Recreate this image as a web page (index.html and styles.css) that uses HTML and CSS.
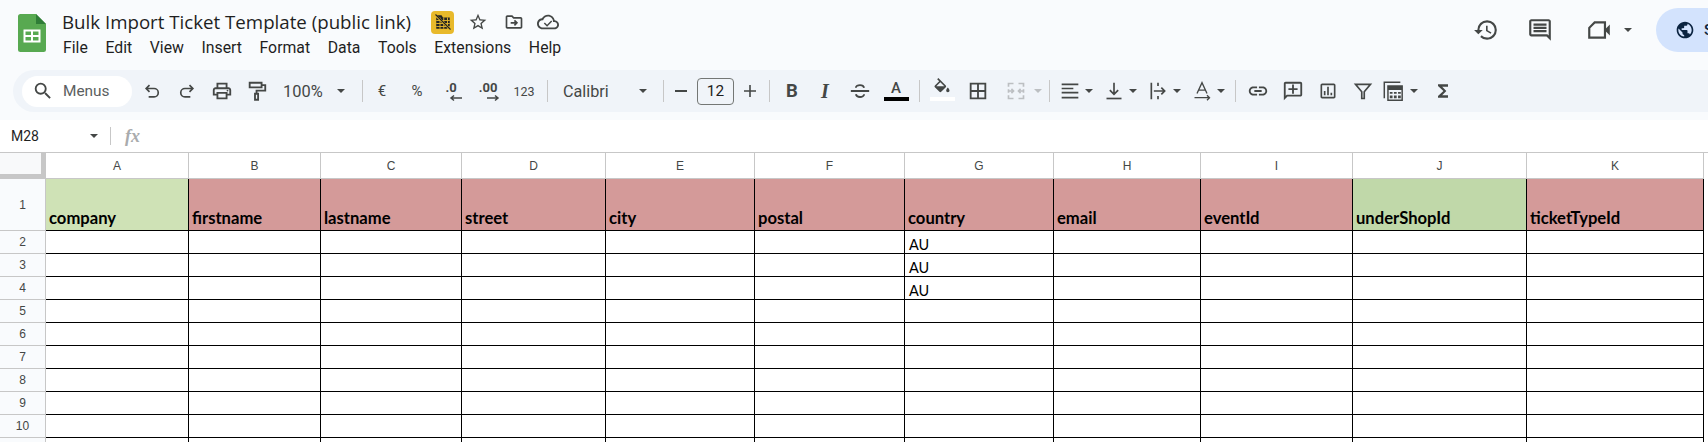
FILE: index.html
```html
<!DOCTYPE html>
<html lang="en">
<head>
<meta charset="utf-8">
<title>Bulk Import Ticket Template (public link)</title>
<link rel="stylesheet" href="styles.css">
</head>
<body>
<header class="topbar">
  <svg class="logo" viewBox="0 0 28 38"><path fill="#58a951" d="M2.500 0H18l10 10v25.500a2.500 2.500 0 0 1-2.500 2.500h-23A2.500 2.500 0 0 1 0 35.500v-33A2.500 2.500 0 0 1 2.500 0z"/><path fill="#2f7d37" d="M18 0l10 10H18z"/><path fill="none" stroke="#fff" stroke-width="2" d="M6.500 16.500h15v11h-15zM6.500 22h15M14 16.500v11"/></svg>
  <div class="docinfo">
    <div class="titlerow">
      <span class="doctitle">Bulk Import Ticket Template (public link)</span>
      <span class="badge"><svg viewBox="0 0 24 24" class="ic18 dark"><path d="M3 3h7l2 3h9v15H3z"/><path stroke="#e8b92b" stroke-width="1.200" fill="none" d="M3 10h18M3 14h18M3 18h18M8 6v15M13 6v15M18 6v15"/><path stroke="#e8b92b" stroke-width="3" d="M2 3l20 19"/><path stroke="#222" stroke-width="1.500" d="M2 2l20 20"/></svg></span>
      <span class="titleicon star"><svg viewBox="0 0 24 24" class="ic20"><path d="M22 9.240l-7.190-.62L12 2 9.190 8.630 2 9.240l5.460 4.730L5.820 21 12 17.270 18.180 21l-1.630-7.030L22 9.240zM12 15.400l-3.760 2.270 1-4.280-3.320-2.880 4.380-.38L12 6.100l1.710 4.040 4.380.38-3.320 2.880 1 4.280L12 15.400z"/></svg></span>
      <span class="titleicon"><svg viewBox="0 0 24 24" class="ic20"><path d="M20 6h-8l-2-2H4c-1.100 0-1.990.9-1.990 2L2 18c0 1.100.9 2 2 2h16c1.100 0 2-.9 2-2V8c0-1.100-.9-2-2-2zm0 12H4V6h5.170l2 2H20v10z"/><path class="line" d="M8 13h7M12.500 10l3 3-3 3"/></svg></span>
      <span class="titleicon cloud"><svg viewBox="0 0 24 24" class="ic22"><path d="M19.350 10.040C18.670 6.590 15.640 4 12 4 9.110 4 6.600 5.640 5.350 8.040 2.340 8.360 0 10.910 0 14c0 3.310 2.690 6 6 6h13c2.760 0 5-2.240 5-5 0-2.640-2.050-4.780-4.650-4.960zM19 18H6c-2.210 0-4-1.790-4-4s1.790-4 4-4h.71C7.370 7.690 9.480 6 12 6c3.040 0 5.500 2.460 5.500 5.500v.5H19c1.660 0 3 1.340 3 3s-1.340 3-3 3z"/><path class="thin" d="M8 13l3 3 5-5"/></svg></span>
    </div>
    <nav class="menubar">
      <span>File</span><span>Edit</span><span>View</span><span>Insert</span><span>Format</span><span>Data</span><span>Tools</span><span>Extensions</span><span>Help</span>
    </nav>
  </div>
  <div class="actions">
    <span class="act hist"><svg viewBox="0 0 24 24" class="ic26"><path d="M13 3a9 9 0 0 0-9 9H1l3.890 3.890.07.14L9 12H6c0-3.870 3.130-7 7-7s7 3.130 7 7-3.130 7-7 7c-1.930 0-3.680-.79-4.940-2.060l-1.420 1.420A8.954 8.954 0 0 0 13 21a9 9 0 0 0 0-18zm-1 5v5l4.280 2.540.72-1.210-3.500-2.080V8H12z"/></svg></span>
    <span class="act chat"><svg viewBox="0 0 24 24" class="ic26"><path d="M21.990 4c0-1.100-.89-2-1.990-2H4c-1.100 0-2 .9-2 2v12c0 1.100.9 2 2 2h14l4 4-.01-18zM20 4v13.170L18.830 16H4V4h16zM6 12h12v2H6zm0-3h12v2H6zm0-3h12v2H6z"/></svg></span>
    <span class="act meet"><svg viewBox="0 0 24 24" class="ic26"><path class="line" d="M8 5h9.500v14H3V10z"/><path d="M17 12l5-5v10z"/></svg><i class="caret"></i></span>
    <span class="share"><svg viewBox="0 0 24 24" class="ic20 navy"><path d="M12 2C6.480 2 2 6.480 2 12s4.480 10 10 10 10-4.480 10-10S17.520 2 12 2zm-1 17.930c-3.950-.49-7-3.850-7-7.930 0-.62.08-1.210.21-1.790L9 15v1c0 1.100.9 2 2 2v1.930zm6.900-2.540c-.26-.81-1-1.390-1.900-1.390h-1v-3c0-.55-.45-1-1-1H8v-2h2c.55 0 1-.45 1-1V7h2c1.100 0 2-.9 2-2v-.41c2.930 1.190 5 4.060 5 7.410 0 2.080-.8 3.970-2.100 5.390z"/></svg><span class="sharetext">Share</span></span>
  </div>
</header>

<div class="toolbar">
  <div class="search"><svg viewBox="0 0 24 24" class="ic22"><path d="M15.500 14h-.79l-.28-.27A6.470 6.470 0 0 0 16 9.500 6.500 6.500 0 1 0 9.500 16c1.610 0 3.090-.59 4.230-1.570l.27.28v.79l5 4.990L20.490 19l-4.990-5zm-6 0C7.010 14 5 11.990 5 9.500S7.010 5 9.500 5 14 7.010 14 9.500 11.990 14 9.500 14z"/></svg><span>Menus</span></div>
  <span class="slot w35 first"><svg viewBox="0 0 24 24" class="ic20"><path class="line" d="M9 5L5 9l4 4M5 9h9.500a5 5 0 0 1 0 10H8"/></svg></span>
  <span class="slot w35"><svg viewBox="0 0 24 24" class="ic20"><path class="line" d="M15 5l4 4-4 4M19 9H9.500a5 5 0 0 0 0 10H16"/></svg></span>
  <span class="slot w35"><svg viewBox="0 0 24 24" class="ic22"><path d="M19 8h-1V3H6v5H5c-1.660 0-3 1.340-3 3v6h4v4h12v-4h4v-6c0-1.660-1.340-3-3-3zM8 5h8v3H8V5zm8 14H8v-4h8v4zm2-4v-2H6v2H4v-4c0-.55.45-1 1-1h14c.55 0 1 .45 1 1v4h-2z"/><circle cx="18" cy="11.500" r="1"/></svg></span>
  <span class="slot w35"><svg viewBox="0 0 24 24" class="ic22"><path class="line" d="M4 3h13v5H4zM17 5.500h4v6H11.500V15M9.800 15h3.400v6.500H9.800z"/></svg></span>
  <span class="zoomctl"><span>100%</span><i class="caret"></i></span>
  <i class="sep w10"></i>
  <span class="slot w30 ttext">€</span>
  <span class="slot w40 ttext">%</span>
  <span class="slot w28"><span class="dec"><b>.0</b><svg viewBox="0 0 14 6" class="arrow"><path class="line thinner" d="M13 3H2M5 .5L2 3l3 2.500"/></svg></span></span>
  <span class="slot w46"><span class="dec"><b>.00</b><svg viewBox="0 0 14 6" class="arrow"><path class="line thinner" d="M1 3h11M9 .5L12 3 9 5.500"/></svg></span></span>
  <span class="slot w26 ttext small">123</span>
  <i class="sep w20"></i>
  <span class="fontctl"><span>Calibri</span><i class="caret"></i></span>
  <i class="sep w10"></i>
  <span class="slot w26 sign"><i class="hbar"></i></span>
  <span class="sizebox">12</span>
  <span class="slot w32 sign"><svg viewBox="0 0 12 12" class="ic12"><path d="M5.200 0h1.600v5.200H12v1.600H6.800V12H5.200V6.800H0V5.200h5.200z"/></svg></span>
  <i class="sep w6"></i>
  <span class="slot w40 glyph bold">B</span>
  <span class="slot w26 glyph ital">I</span>
  <span class="slot w44"><svg viewBox="0 0 24 24" class="ic22"><path class="line" d="M2 12h20M16.500 8.500C16 6.500 14.300 5.500 12 5.500S7.500 6.800 7.500 8.500M7.500 15.500c.5 2 2.200 3 4.500 3s4.500-1.300 4.500-3"/></svg></span>
  <span class="slot w28 colorbtn"><span class="glyph letter">A</span><i class="bar black"></i></span>
  <i class="sep w18"></i>
  <span class="slot w28 colorbtn"><svg viewBox="0 0 24 24" class="ic20 fillicon"><path fill-rule="evenodd" d="M16.560 8.940L7.620 0 6.210 1.410l2.380 2.380-5.150 5.150a1.490 1.490 0 0 0 0 2.120l5.500 5.500c.29.290.68.44 1.060.44s.77-.15 1.060-.44l5.500-5.500c.59-.58.59-1.530 0-2.120zM5.210 10L10 5.210 14.790 10H5.210zM19 11.500s-2 2.170-2 3.500c0 1.100.9 2 2 2s2-.9 2-2c0-1.330-2-3.500-2-3.500z"/></svg><i class="bar white"></i></span>
  <span class="slot w44"><svg viewBox="0 0 24 24" class="ic22"><path class="line" d="M4 4h16v16H4zM4 12h16M12 4v16"/></svg></span>
  <span class="slot w32"><svg viewBox="0 0 24 24" class="ic20 faint"><path class="line" d="M3 7V3h6M15 3h6v4M3 17v4h6M15 21h6v-4M3 10v1M21 10v1M3 13v1M21 13v1M2 12h7M6.500 9.500L9 12l-2.500 2.500M22 12h-7M17.500 9.500L15 12l2.500 2.500"/></svg></span>
  <span class="slot w12"><i class="caret dim"></i></span>
  <i class="sep w10"></i>
  <div class="group">
    <span class="drop"><svg viewBox="0 0 24 24" class="ic20"><path d="M2 3h20v2H2zM2 8h14v2H2zM2 13h20v2H2zM2 19h20v2H2z"/></svg><i class="caret"></i></span>
    <span class="drop"><svg viewBox="0 0 24 24" class="ic20"><path d="M3 20h18v2H3z"/><path class="line" d="M12 2v14M7 11l5 5 5-5"/></svg><i class="caret"></i></span>
    <span class="drop"><svg viewBox="0 0 24 24" class="ic20"><path class="line" d="M4 2v20M12 2v4M12 18v4M7 12h13M16 8l4 4-4 4"/></svg><i class="caret"></i></span>
    <span class="drop"><svg viewBox="0 0 24 24" class="ic20"><path class="line thin" d="M6 15l6-13 6 13M8 11h8M3 20h18M18 17l3 3-3 3"/></svg><i class="caret"></i></span>
  </div>
  <i class="sep w10"></i>
  <span class="slot w35"><svg viewBox="0 0 24 24" class="ic22"><path d="M3.900 12c0-1.710 1.390-3.100 3.100-3.100h4V7H7c-2.760 0-5 2.240-5 5s2.240 5 5 5h4v-1.900H7c-1.710 0-3.100-1.390-3.100-3.100zM8 13h8v-2H8v2zm9-6h-4v1.900h4c1.710 0 3.100 1.390 3.100 3.100s-1.390 3.100-3.100 3.100h-4V17h4c2.760 0 5-2.240 5-5s-2.240-5-5-5z"/></svg></span>
  <span class="slot w35"><svg viewBox="0 0 24 24" class="ic22"><path d="M22 4c0-1.100-.9-2-2-2H4c-1.100 0-2 .9-2 2v18l4-4h14c1.100 0 2-.9 2-2V4zm-2 12H5.170L4 17.170V4h16v12zM11 5h2v4h4v2h-4v4h-2v-4H7V9h4z"/></svg></span>
  <span class="slot w35"><svg viewBox="0 0 24 24" class="ic20"><path d="M19 3H5c-1.100 0-2 .9-2 2v14c0 1.100.9 2 2 2h14c1.100 0 2-.9 2-2V5c0-1.100-.9-2-2-2zm0 16H5V5h14v14zM7 12h2v5H7zm4-5h2v10h-2zm4 7h2v3h-2z"/></svg></span>
  <span class="slot w35"><svg viewBox="0 0 24 24" class="ic20"><path class="line" d="M3 4h18l-7.500 9v8h-3v-8z"/></svg></span>
  <span class="drop calc"><svg viewBox="0 0 24 24" class="ic22"><path class="line thin" d="M2.500 20V2.500H20"/><path class="line thin" d="M6.500 6.500H22V22H6.500z"/><path d="M6.500 6.500H22V11H6.500zM8.500 13h3v2h-3zM13 13h3v2h-3zM17.500 13h3v2h-3zM8.500 17h3v3h-3zM13 17h3v3h-3zM17.500 17h3v3h-3z"/></svg><i class="caret"></i></span>
  <span class="slot w48 sigma"><svg viewBox="0 0 24 24" class="ic20"><path d="M18 4H6v2l6.500 6L6 18v2h12v-3h-7l5-5-5-5h7z"/></svg></span>
</div>

<div class="formulabar">
  <span class="namebox">M28</span>
  <i class="caret"></i>
  <i class="fsep"></i>
  <span class="fx">fx</span>
</div>

<main class="sheet">
  <table class="grid">
    <colgroup>
      <col class="c-head"><col class="c-a"><col class="c-b"><col class="c-c"><col class="c-d"><col class="c-e"><col class="c-f"><col class="c-g"><col class="c-h"><col class="c-i"><col class="c-j"><col class="c-k">
    </colgroup>
    <thead>
      <tr class="letters"><th class="corner"></th><th>A</th><th>B</th><th>C</th><th>D</th><th>E</th><th>F</th><th>G</th><th>H</th><th>I</th><th>J</th><th>K</th></tr>
    </thead>
    <tbody>
      <tr class="titles"><th>1</th><td class="green1">company</td><td class="red">firstname</td><td class="red">lastname</td><td class="red">street</td><td class="red">city</td><td class="red">postal</td><td class="red">country</td><td class="red">email</td><td class="red">eventId</td><td class="green2">underShopId</td><td class="red">ticketTypeId</td></tr>
      <tr><th>2</th><td></td><td></td><td></td><td></td><td></td><td></td><td>AU</td><td></td><td></td><td></td><td></td></tr>
      <tr><th>3</th><td></td><td></td><td></td><td></td><td></td><td></td><td>AU</td><td></td><td></td><td></td><td></td></tr>
      <tr><th>4</th><td></td><td></td><td></td><td></td><td></td><td></td><td>AU</td><td></td><td></td><td></td><td></td></tr>
      <tr><th>5</th><td></td><td></td><td></td><td></td><td></td><td></td><td></td><td></td><td></td><td></td><td></td></tr>
      <tr><th>6</th><td></td><td></td><td></td><td></td><td></td><td></td><td></td><td></td><td></td><td></td><td></td></tr>
      <tr><th>7</th><td></td><td></td><td></td><td></td><td></td><td></td><td></td><td></td><td></td><td></td><td></td></tr>
      <tr><th>8</th><td></td><td></td><td></td><td></td><td></td><td></td><td></td><td></td><td></td><td></td><td></td></tr>
      <tr><th>9</th><td></td><td></td><td></td><td></td><td></td><td></td><td></td><td></td><td></td><td></td><td></td></tr>
      <tr><th>10</th><td></td><td></td><td></td><td></td><td></td><td></td><td></td><td></td><td></td><td></td><td></td></tr>
      <tr><th></th><td></td><td></td><td></td><td></td><td></td><td></td><td></td><td></td><td></td><td></td><td></td></tr>
    </tbody>
  </table>
</main>
</body>
</html>
```
FILE: styles.css
```css
* { box-sizing: border-box; }
html, body { margin: 0; height: 442px; overflow: hidden; }
body {
  width: 1708px;
  background: #f9fbfd;
  color: #1f1f1f;
  font-family: Roboto, "Liberation Sans", sans-serif;
  display: flex;
  flex-direction: column;
}
svg { display: block; fill: #444746; flex: none; overflow: visible; }
i { font-style: normal; display: block; }
.ic12 { width: 12px; height: 12px; }
.ic18 { width: 18px; height: 18px; }
.ic20 { width: 20px; height: 20px; }
.ic22 { width: 22px; height: 22px; }
.ic26 { width: 26px; height: 26px; }
.line { fill: none; stroke: #444746; stroke-width: 2; }
.thin { fill: none; stroke: #444746; stroke-width: 1.600; }
.thinner { stroke-width: 1.500; }
.dark { fill: #222; }
.navy { fill: #0b2440; }
.faint .line { stroke: #bcbfc2; }
.caret {
  width: 0; height: 0; flex: none;
  border-left: 4.500px solid transparent;
  border-right: 4.500px solid transparent;
  border-top: 4.500px solid #444746;
}
.caret.dim { border-top-color: #bcbfc2; }

/* title bar */
.topbar { height: 70px; flex: none; display: flex; align-items: flex-start; padding-left: 18px; }
.logo { width: 28px; height: 38px; margin-top: 14px; }
.docinfo { flex: 1; margin-left: 16px; padding-top: 7px; min-width: 0; }
.titlerow { display: flex; align-items: center; height: 28px; }
.doctitle { font-family: "Open Sans", sans-serif; font-size: 18.700px; color: #1f1f1f; width: 369px; white-space: nowrap; }
.badge { width: 23px; height: 23px; margin-top: 2px; background: #e8b92b; border-radius: 4px; display: flex; align-items: center; justify-content: center; }
.titleicon { width: 36px; margin-top: 2px; display: flex; justify-content: center; }
.titleicon.star { margin-left: 6px; }
.titleicon.cloud { margin-left: -2px; }
.menubar { display: flex; gap: 17.600px; font-size: 15.800px; line-height: 20px; margin-top: 3px; margin-left: 1px; }
.actions { width: 238px; flex: none; height: 70px; display: flex; align-items: center; overflow: hidden; padding-bottom: 10px; }
.act { display: flex; align-items: center; flex: none; }
.hist { margin-left: 3px; }
.chat { margin-left: 28px; }
.meet { margin-left: 33px; gap: 12px; }
.share { margin-left: 24px; flex: none; width: 110px; height: 44px; border-radius: 22px; background: #d3e3fd; display: flex; align-items: center; padding-left: 19px; gap: 9px; }
.sharetext { font-size: 15.400px; font-weight: 500; color: #0b2440; }

/* toolbar */
.toolbar { height: 42px; flex: none; margin-left: 13px; background: #f0f4f9; border-radius: 21px 0 0 21px; display: flex; align-items: center; padding-left: 9px; }
.search { width: 110px; height: 31px; background: #fff; border-radius: 16px; display: flex; align-items: center; padding-left: 10px; gap: 9px; font-size: 15.400px; color: #5b5e60; flex: none; }
.slot { display: flex; align-items: center; justify-content: center; flex: none; height: 30px; white-space: nowrap; }
.first { margin-left: 2px; }
.w6 { width: 6px; } .w10 { width: 10px; } .w12 { width: 12px; } .w18 { width: 18px; } .w20 { width: 20px; }
.w26 { width: 26px; } .w28 { width: 28px; } .w30 { width: 30px; } .w32 { width: 32px; }
.w35 { width: 35px; } .w40 { width: 40px; } .w44 { width: 44px; } .w46 { width: 46px; } .w48 { width: 48px; }
.sigma { margin-left: 1px; }
.sep { height: 22px; flex: none; }
.sep::after { content: ""; display: block; width: 1px; height: 100%; background: #c7c7c7; margin: 0 auto; }
.zoomctl { width: 83px; padding-left: 9px; display: flex; align-items: center; gap: 14px; font-size: 16.400px; color: #444746; flex: none; }
.ttext { font-size: 15px; color: #444746; }
.small { font-size: 12.500px; }
.dec { display: flex; flex-direction: column; align-items: center; font-size: 13px; line-height: 12px; color: #444746; }
.dec b { font-weight: 700; }
.arrow { width: 14px; height: 6px; margin: 1px 0 0 10px; }
.fontctl { width: 101px; padding-left: 6px; padding-right: 11px; display: flex; align-items: center; justify-content: space-between; font-size: 16.200px; color: #444746; flex: none; }
.hbar { width: 12px; height: 2px; background: #444746; }
.sizebox { width: 37px; height: 27px; margin-left: 3px; flex: none; border: 1px solid #747775; border-radius: 4px; display: flex; align-items: center; justify-content: center; font-size: 15.400px; color: #1f1f1f; }
.glyph { color: #444746; font-size: 18.500px; }
.bold { font-weight: 700; }
.ital { font-family: "Liberation Serif", serif; font-style: italic; font-weight: 700; font-size: 20px; }
.colorbtn { flex-direction: column; height: 32px; justify-content: flex-start; padding-bottom: 6px; }
.letter { font-size: 15px; line-height: 22px; height: 20px; margin-top: 2px; font-weight: 500; }
.fillicon { margin-top: 3px; margin-bottom: -1px; }
.bar { width: 25px; height: 4px; flex: none; margin-top: auto; }
.black { background: #000; }
.white { background: #fff; }
.group { display: flex; gap: 11px; margin-left: 6px; margin-right: 5px; }
.drop { display: flex; align-items: center; gap: 5px; flex: none; }
.calc { margin-left: 2px; gap: 6px; }

/* formula bar */
.formulabar { height: 32px; margin-top: 8px; flex: none; background: #fff; display: flex; align-items: center; padding-left: 11px; }
.namebox { width: 79px; font-size: 14px; color: #1f1f1f; }
.fsep { width: 1px; height: 18px; background: #c7c7c7; margin-left: 12px; }
.fx { font-family: "Liberation Serif", serif; font-style: italic; font-weight: 700; font-size: 18px; color: #a9abad; margin-left: 14px; }

/* sheet */
.sheet { flex: 1; min-height: 0; overflow: hidden; background: #fff; border-top: 1px solid #c7c7c7; }
.grid { border-collapse: separate; border-spacing: 0; table-layout: fixed; width: 1704px; }
.c-head { width: 46px; } .c-a { width: 143px; } .c-b { width: 132px; } .c-c { width: 141px; }
.c-d { width: 144px; } .c-e { width: 149px; } .c-f { width: 150px; } .c-g { width: 149px; }
.c-h { width: 147px; } .c-i { width: 152px; } .c-j { width: 174px; } .c-k { width: 177px; }
.grid th { font-family: "Liberation Sans", sans-serif; font-weight: 400; font-size: 12px; color: #444746; border-right: 1px solid #c7c7c7; border-bottom: 1px solid #c7c7c7; padding: 0; background: #fff; }
.grid tbody th { background: #f9fbfd; }
.letters th { height: 26px; }
.grid .corner { background: #f8f9fa; border-right: 5px solid #c7c7c7; border-bottom: 5px solid #c7c7c7; }
.grid td { height: 23px; padding: 0 0 0 4px; border-right: 1px solid #000; border-bottom: 1px solid #000; font-family: Lato, "Liberation Sans", sans-serif; font-size: 14.500px; line-height: 17px; color: #000; vertical-align: bottom; white-space: nowrap; }
.titles th, .titles td { height: 52px; }
.grid .titles td { font-weight: 700; font-size: 16.600px; padding: 0 0 3px 3px; }
.green1 { background: #cfe2b6; }
.green2 { background: #c0d8a9; }
.red { background: #d49a99; }
```
